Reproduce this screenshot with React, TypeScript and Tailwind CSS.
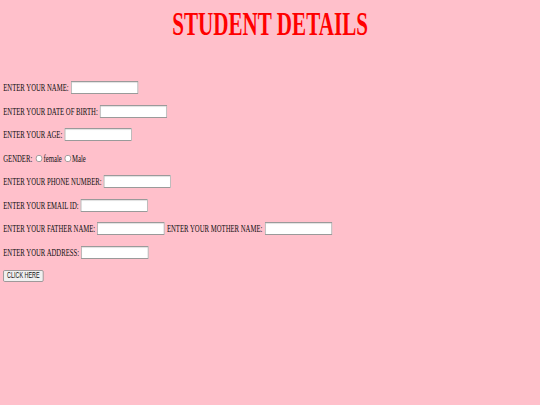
const labelCls = "text-[10.5px] leading-[13px] text-[#111] whitespace-nowrap";

function Field({ label }: { label: string }) {
  return (
    <>
      <span className={labelCls}>{label}</span>
      <input
        type="text"
        className="h-[13px] w-[105px] border border-[#9a9a9a] bg-white outline-none shadow-[inset_0_1px_1px_rgba(0,0,0,0.12)]"
      />
    </>
  );
}

function Radio({ label }: { label: string }) {
  return (
    <label className="flex items-center gap-[2px]">
      <span className="h-[7px] w-[10px] rounded-full border border-[#8a8a8a] bg-white" />
      <span className={labelCls}>{label}</span>
    </label>
  );
}

export default function App() {
  return (
    <div className="h-screen w-full overflow-hidden bg-[#ffc0cb]">
      <div className="w-[844px] origin-top-left scale-x-[0.64] font-['Liberation_Serif',serif]">
        <h1 className="pt-[6px] text-center text-[33px] font-bold leading-[36px] text-[#ff0000]">
          STUDENT DETAILS
        </h1>
        <form className="mt-[39px] flex flex-col gap-[10.5px] pl-[5px]">
          <div className="flex h-[13px] items-center gap-[3.5px]">
            <Field label="ENTER YOUR NAME:" />
          </div>
          <div className="flex h-[13px] items-center gap-[3.5px]">
            <Field label="ENTER YOUR DATE OF BIRTH:" />
          </div>
          <div className="flex h-[13px] items-center gap-[3.5px]">
            <Field label="ENTER YOUR AGE:" />
          </div>
          <div className="flex h-[13px] items-center gap-[3.5px]">
            <span className={labelCls}>GENDER:</span>
            <div className="ml-[2px] flex items-center gap-[4px]">
              <Radio label="female" />
              <Radio label="Male" />
            </div>
          </div>
          <div className="flex h-[13px] items-center gap-[3.5px]">
            <Field label="ENTER YOUR PHONE NUMBER:" />
          </div>
          <div className="flex h-[13px] items-center gap-[3.5px]">
            <Field label="ENTER YOUR EMAIL ID:" />
          </div>
          <div className="flex h-[13px] items-center gap-[3.5px]">
            <Field label="ENTER YOUR FATHER NAME:" />
            <Field label="ENTER YOUR MOTHER NAME:" />
          </div>
          <div className="flex h-[13px] items-center gap-[3.5px]">
            <Field label="ENTER YOUR ADDRESS:" />
          </div>
          <div className="flex h-[13px] items-center">
            <button
              type="button"
              className="flex h-[12px] w-[63px] items-center justify-center rounded-[2px] border border-[#8a8a8a] bg-[#f0f0f0] font-['Liberation_Sans',sans-serif] text-[8.5px] leading-none text-[#111]"
            >
              CLICK HERE
            </button>
          </div>
        </form>
      </div>
    </div>
  );
}
